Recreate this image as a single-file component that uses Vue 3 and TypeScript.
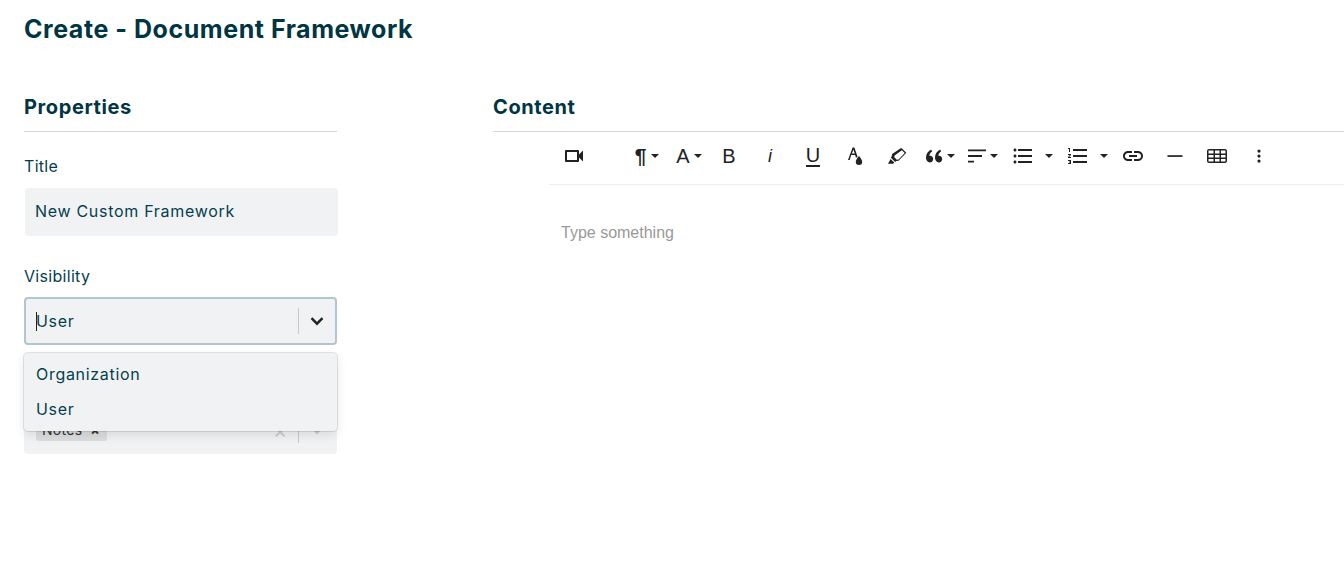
<script setup lang="ts">
interface Tool {
  name: string
  width: number
  text?: string
  textClass?: string
  path?: string
  caret?: boolean
  gap?: number
}

const tools: Tool[] = [
  { name: 'video', width: 42, path: 'M17 10.5V7c0-.55-.45-1-1-1H4c-.55 0-1 .45-1 1v10c0 .55.45 1 1 1h12c.55 0 1-.45 1-1v-3.5l4 4v-11l-4 4zM15 16H5V8h10v8z' },
  { name: 'spacer', width: 31 },
  { name: 'paragraph', width: 42, text: '¶', textClass: 'para', caret: true, gap: 5 },
  { name: 'font', width: 42, text: 'A', caret: true, gap: 4 },
  { name: 'bold', width: 38, text: 'B' },
  { name: 'italic', width: 44, text: 'i', textClass: 'italic' },
  { name: 'underline', width: 42, text: 'U', textClass: 'under' },
  { name: 'color', width: 42, path: 'M9.600 3.500h1.800l3.200 9.300-1.600 1-.9-2.800H8.200L6.700 16H5L9.600 3.500zm.9 2.300L8.800 9.600h3l-1.300-3.800zM16 12s-3.200 3.500-3.200 5.700a3.200 3.200 0 0 0 6.400 0C19.200 15.500 16 12 16 12z' },
  { name: 'highlight', width: 42, path: 'M16.700 4.200 21.300 8.800l-7.700 7.900-2.400.4-1 1-4.500-4.500 1-1 .4-2.500 8.600-5.900zm.2 2.100-7.300 5.100-.3 1.800 2.500 2.500 1.800-.3 6.100-6.300-2.800-2.800zM5.600 15l3.600 3.600-1.100 1.100H3L5.600 15z' },
  { name: 'quote', width: 42, path: 'M8.200 5.500C5 7 3 10 3 13.800 3 16.400 4.600 18.500 6.800 18.500c2 0 3.400-1.500 3.400-3.400 0-1.900-1.300-3.300-3.100-3.300-.3 0-.6 0-.8.100.2-1.900 1.300-3.300 2.800-4.300l-.9-2.100zm9 0c-3.200 1.500-5.200 4.500-5.200 8.300 0 2.600 1.600 4.700 3.800 4.700 2 0 3.400-1.500 3.400-3.400 0-1.900-1.300-3.300-3.100-3.300-.3 0-.6 0-.8.100.2-1.900 1.300-3.300 2.800-4.300l-.9-2.100z', caret: true, gap: 0 },
  { name: 'align', width: 42, path: 'M3 5.400h18v1.800H3zM3 11.100h14v1.800H3zM3 16.800h6v1.800H3z', caret: true, gap: 1 },
  { name: 'list', width: 60, path: 'M4 10.500c-.83 0-1.500.67-1.500 1.500s.67 1.500 1.500 1.500 1.500-.67 1.500-1.500-.67-1.500-1.500-1.500zm0-6c-.83 0-1.500.67-1.500 1.500S3.170 7.500 4 7.500 5.500 6.830 5.500 6 4.830 4.500 4 4.500zm0 12c-.83 0-1.500.68-1.500 1.500s.68 1.500 1.500 1.500 1.500-.68 1.500-1.500-.67-1.500-1.500-1.500zM7 19h14v-2H7v2zm0-6h14v-2H7v2zm0-8v2h14V5H7z', caret: true, gap: 10 },
  { name: 'ordered', width: 50, path: 'M2 17h2v.5H3v1h1v.5H2v1h3v-4H2v1zm1-9h1V4H2v1h1v3zm-1 3h1.800L2 13.100v.9h3v-1H3.200L5 10.900V10H2v1zm5-6v2h14V5H7zm0 14h14v-2H7v2zm0-6h14v-2H7v2z', caret: true, gap: 10 },
  { name: 'link', width: 42, path: 'M3.900 12c0-1.710 1.390-3.100 3.100-3.100h4V7H7c-2.760 0-5 2.240-5 5s2.240 5 5 5h4v-1.900H7c-1.710 0-3.100-1.390-3.100-3.100zM8 13h8v-2H8v2zm9-6h-4v1.900h4c1.710 0 3.100 1.390 3.100 3.100s-1.390 3.100-3.100 3.100h-4V17h4c2.760 0 5-2.240 5-5s-2.240-5-5-5z' },
  { name: 'rule', width: 42, path: 'M4.500 11.200h15v1.700h-15z' },
  { name: 'table', width: 42, path: 'M4 5h16a2 2 0 0 1 2 2v10a2 2 0 0 1-2 2H4a2 2 0 0 1-2-2V7a2 2 0 0 1 2-2zm-.5 1.500v3h5v-3h-5zm6.500 0v3h4.500v-3H10zm6 0v3h4.500v-3H16zm-12.500 4.500v2.600h5V11h-5zm6.500 0v2.600h4.500V11H10zm6 0v2.600h4.500V11H16zM3.500 15v2.500h5V15h-5zm6.500 0v2.500h4.500V15H10zm6 0v2.500h4.500V15H16z' },
  { name: 'more', width: 42, path: 'M12 5.500a1.600 1.600 0 1 1 0 3.200 1.600 1.600 0 0 1 0-3.200zm0 5a1.600 1.600 0 1 1 0 3.200 1.600 1.600 0 0 1 0-3.200zm0 5a1.600 1.600 0 1 1 0 3.200 1.600 1.600 0 0 1 0-3.200z' },
]
</script>

<template>
  <div class="page">
    <h1 class="page-title">Create - Document Framework</h1>

    <div class="columns">
      <section class="props">
        <h2 class="section-title">Properties</h2>

        <label class="field-label">Title</label>
        <input class="text-input" type="text" value="New Custom Framework" />

        <label class="field-label second">Visibility</label>
        <div class="select focused">
          <div class="select-value"><span class="cursor"></span>User</div>
          <span class="sep"></span>
          <svg class="chev" viewBox="0 0 20 20" width="20" height="20">
            <path d="M4.500 7.200 10 12.700l5.500-5.500" fill="none" stroke="#222" stroke-width="2.400" />
          </svg>
        </div>

        <div class="select-wrap">
          <div class="select muted">
            <div class="select-value">
              <span class="tag">Notes <i class="tag-x">×</i></span>
            </div>
            <span class="clear">×</span>
            <span class="sep"></span>
            <svg class="chev" viewBox="0 0 20 20" width="20" height="20">
              <path d="M4.500 7.200 10 12.700l5.500-5.500" fill="none" stroke="#ccc" stroke-width="2.400" />
            </svg>
          </div>
          <ul class="menu">
            <li>Organization</li>
            <li>User</li>
          </ul>
        </div>
      </section>

      <section class="content">
        <h2 class="section-title">Content</h2>
        <div class="editor">
          <div class="toolbar">
            <div v-for="t in tools" :key="t.name" class="tool" :style="{ width: t.width + 'px', gap: (t.gap ?? 0) + 'px' }">
              <span v-if="t.text" class="tool-text" :class="t.textClass">{{ t.text }}</span>
              <svg v-else-if="t.path" viewBox="0 0 24 24" width="24" height="24">
                <path :d="t.path" fill="#222" fill-rule="evenodd" />
              </svg>
              <span v-if="t.caret" class="caret"></span>
            </div>
          </div>
          <div class="placeholder">Type something</div>
        </div>
      </section>
    </div>
  </div>
</template>

<style scoped>
.page {
  padding: 13px 0 0 24px;
  font-family: Inter, "Open Sans", sans-serif;
  color: #053f4f;
  overflow: hidden;
  height: 569px;
}
.page-title {
  margin: 0;
  font-size: 25px;
  line-height: 32px;
  font-weight: 700;
  letter-spacing: 0.55px;
  color: #003543;
}
.columns {
  display: grid;
  grid-template-columns: 313px 1fr;
  column-gap: 156px;
  margin-top: 46px;
}
.section-title {
  margin: 0;
  font-size: 20px;
  line-height: 32px;
  font-weight: 700;
  letter-spacing: 0.6px;
  padding-bottom: 8px;
  border-bottom: 1px solid #d6d6d6;
  color: #003543;
}
.field-label {
  display: block;
  font-size: 16px;
  line-height: 24px;
  letter-spacing: 0.3px;
  margin-top: 22px;
  margin-bottom: 10px;
}
.field-label.second {
  margin-top: 28px;
  margin-bottom: 9px;
}
.text-input {
  display: block;
  box-sizing: border-box;
  width: 313px;
  height: 48px;
  margin-left: 1px;
  padding: 0 10px 2px;
  border: none;
  border-radius: 4px;
  background: #f1f2f4;
  font: inherit;
  font-size: 16px;
  letter-spacing: 0.7px;
  color: #053f4f;
}
.select {
  box-sizing: border-box;
  display: flex;
  align-items: center;
  width: 313px;
  height: 48px;
  padding-right: 8px;
  border-radius: 4px;
  background: #f1f2f4;
  font-size: 16px;
  letter-spacing: 0.7px;
}
.select.focused {
  border: 2px solid #b2c6cf;
}
.select-value {
  flex: 1;
  display: flex;
  align-items: center;
  padding-left: 10px;
}
.select.muted {
  padding-left: 2px;
  padding-right: 10px;
}
.cursor {
  display: inline-block;
  width: 1px;
  height: 19px;
  background: #222;
  margin-right: -1px;
}
.sep {
  width: 1px;
  height: 26px;
  background: #c6c9cc;
  margin: 0 8px 0 10px;
}
.chev {
  display: block;
}
.select-wrap {
  position: relative;
  padding-top: 61px;
}
.tag {
  display: inline-flex;
  align-items: center;
  justify-content: space-between;
  box-sizing: border-box;
  width: 71px;
  height: 21px;
  padding: 0 7px 2px 6px;
  background: #dcdddf;
  border-radius: 2px;
  font-size: 14px;
  letter-spacing: 0.3px;
  color: #333;
}
.tag-x {
  font-style: normal;
  font-weight: 700;
}
.clear {
  color: #ccc;
  font-size: 22px;
  line-height: 1;
}
.menu {
  position: absolute;
  top: 8px;
  left: 0;
  box-sizing: border-box;
  width: 313px;
  height: 78px;
  margin: 0;
  padding: 4px 0;
  list-style: none;
  background: #f1f2f4;
  border-radius: 4px;
  box-shadow: 0 0 0 1px rgba(0, 0, 0, 0.1), 0 4px 11px rgba(0, 0, 0, 0.1);
  font-size: 16px;
  letter-spacing: 0.7px;
}
.menu li {
  height: 35px;
  line-height: 35px;
  padding-left: 12px;
}
.editor {
  margin-left: 56px;
}
.toolbar {
  display: flex;
  align-items: center;
  height: 48px;
  padding-left: 4px;
  padding-bottom: 4px;
  border-bottom: 1px solid #eeeeee;
}
.tool {
  flex: none;
  display: flex;
  align-items: center;
  justify-content: center;
  height: 24px;
}
.tool-text {
  font-family: "Liberation Sans", sans-serif;
  font-size: 20px;
  line-height: 24px;
  color: #222;
}
.tool-text.para {
  font-size: 21px;
  font-weight: 700;
}
.tool-text.italic {
  font-style: italic;
  font-size: 18px;
}
.tool-text.under {
  border-bottom: 2px solid #222;
  line-height: 19px;
}
.caret {
  width: 0;
  height: 0;
  border-left: 4px solid transparent;
  border-right: 4px solid transparent;
  border-top: 4px solid #222;
}
.placeholder {
  padding: 38px 0 0 12px;
  font-family: "Liberation Sans", sans-serif;
  font-size: 16px;
  line-height: 20px;
  color: #999;
}
</style>

<style>
html,
body {
  margin: 0;
  background: #fff;
}
</style>
